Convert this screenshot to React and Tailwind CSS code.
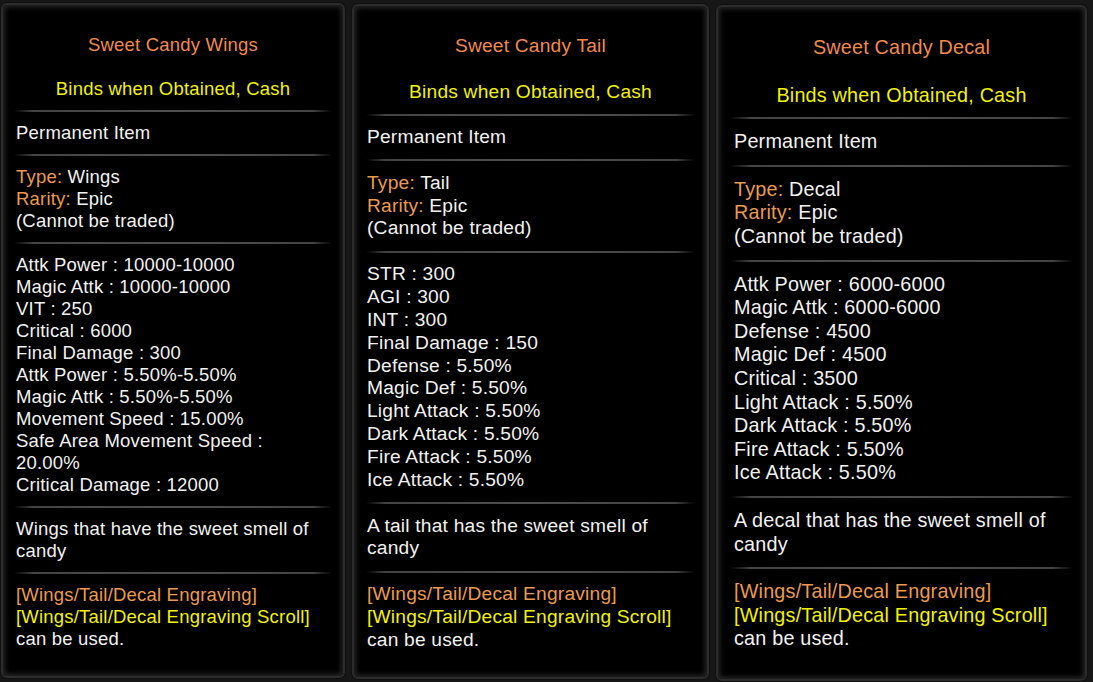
import React from 'react';

const panels = [
  {
    title: 'Sweet Candy Wings',
    type: 'Wings',
    stats: [
      'Attk Power : 10000-10000',
      'Magic Attk : 10000-10000',
      'VIT : 250',
      'Critical : 6000',
      'Final Damage : 300',
      'Attk Power : 5.50%-5.50%',
      'Magic Attk : 5.50%-5.50%',
      'Movement Speed : 15.00%',
      'Safe Area Movement Speed :',
      '20.00%',
      'Critical Damage : 12000',
    ],
    desc: ['Wings that have the sweet smell of', 'candy'],
    box: 'w-[344px] h-[675px] mt-[3px]',
    text: 'text-[18.5px] leading-[22px]',
    head: 'pt-[29px] pb-[10px]',
    gap: 'mt-[22px]',
    sec: 'py-[10px] pl-[13px]',
    line: 'mx-[11px]',
  },
  {
    title: 'Sweet Candy Tail',
    type: 'Tail',
    stats: [
      'STR : 300',
      'AGI : 300',
      'INT : 300',
      'Final Damage : 150',
      'Defense : 5.50%',
      'Magic Def : 5.50%',
      'Light Attack : 5.50%',
      'Dark Attack : 5.50%',
      'Fire Attack : 5.50%',
      'Ice Attack : 5.50%',
    ],
    desc: ['A tail that has the sweet smell of', 'candy'],
    box: 'w-[357px] h-[675px] mt-[4px]',
    text: 'text-[19.2px] leading-[22.9px]',
    head: 'pt-[29px] pb-[10px]',
    gap: 'mt-[23px]',
    sec: 'py-[10.3px] pl-[13px]',
    line: 'mx-[12px]',
  },
  {
    title: 'Sweet Candy Decal',
    type: 'Decal',
    stats: [
      'Attk Power : 6000-6000',
      'Magic Attk : 6000-6000',
      'Defense : 4500',
      'Magic Def : 4500',
      'Critical : 3500',
      'Light Attack : 5.50%',
      'Dark Attack : 5.50%',
      'Fire Attack : 5.50%',
      'Ice Attack : 5.50%',
    ],
    desc: ['A decal that has the sweet smell of', 'candy'],
    box: 'w-[371px] h-[676px] mt-[5px]',
    text: 'text-[19.8px] leading-[23.6px]',
    head: 'pt-[29px] pb-[10px]',
    gap: 'mt-[24px]',
    sec: 'py-[11px] pl-[16px]',
    line: 'mx-[12px]',
  },
];

function Divider({ className }) {
  return (
    <div
      className={`h-[2px] bg-[linear-gradient(90deg,transparent,#434343_6%,#4f4f4f_50%,#434343_94%,transparent)] ${className}`}
    />
  );
}

function Panel({ p }) {
  return (
    <div
      className={`${p.box} ${p.text} shrink-0 rounded-[6px] border-2 border-[#2c2c2c] bg-black shadow-[inset_0_0_5px_2px_#262626,0_0_2px_#000] tracking-[0.2px] text-[#f2f2f2]`}
    >
      <div className={`${p.head} text-center`}>
        <div className="text-[#f08a4c]">{p.title}</div>
        <div className={`${p.gap} text-[#f2f200]`}>Binds when Obtained, Cash</div>
      </div>
      <Divider className={p.line} />
      <div className={p.sec}>Permanent Item</div>
      <Divider className={p.line} />
      <div className={p.sec}>
        <div>
          <span className="text-[#eb9a4e]">Type:</span> {p.type}
        </div>
        <div>
          <span className="text-[#eb9a4e]">Rarity:</span> Epic
        </div>
        <div>(Cannot be traded)</div>
      </div>
      <Divider className={p.line} />
      <div className={p.sec}>
        {p.stats.map((s, i) => (
          <div key={i} className="whitespace-nowrap">
            {s}
          </div>
        ))}
      </div>
      <Divider className={p.line} />
      <div className={p.sec}>
        {p.desc.map((d, i) => (
          <div key={i} className="whitespace-nowrap">
            {d}
          </div>
        ))}
      </div>
      <Divider className={p.line} />
      <div className={p.sec}>
        <div className="text-[#eb9a4e]">[Wings/Tail/Decal Engraving]</div>
        <div className="text-[#f2f200]">[Wings/Tail/Decal Engraving Scroll]</div>
        <div>can be used.</div>
      </div>
    </div>
  );
}

export default function App() {
  return (
    <div
      className="w-[1093px] h-[682px] overflow-hidden bg-[#171717] flex items-start pl-[1px] gap-[7px]"
      style={{ fontFamily: '"Liberation Sans", Arial, sans-serif' }}
    >
      {panels.map((p, i) => (
        <Panel key={i} p={p} />
      ))}
    </div>
  );
}
